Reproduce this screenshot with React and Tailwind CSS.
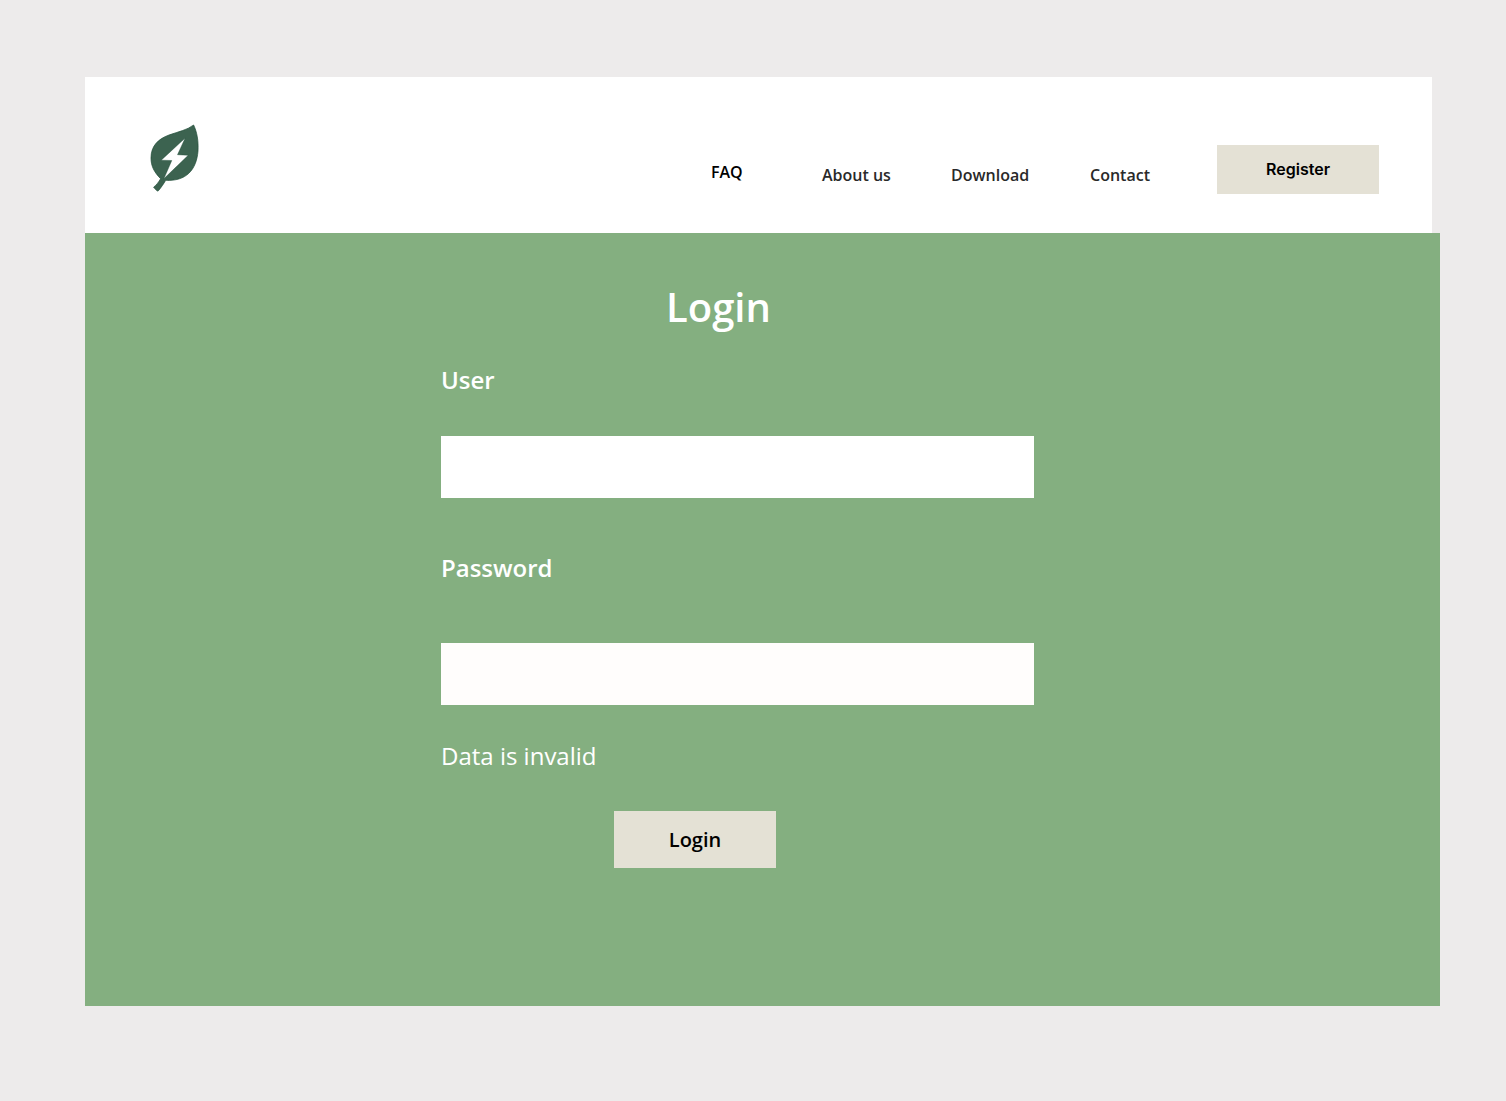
const links = [
  { label: "FAQ", style: "w-[111px] pb-[3px] text-black" },
  { label: "About us", style: "w-[129px] text-[#292929]" },
  { label: "Download", style: "w-[139px] text-[#292929]" },
  { label: "Contact", style: "w-[127px] text-[#292929]" },
];

function Logo() {
  return (
    <svg width="50" height="68" viewBox="0 0 50 68" role="img" aria-label="Leaf logo">
      <path
        fill="#3c6350"
        stroke="#1d4a35"
        strokeWidth="0.7"
        d="M43.6 1 C47 8 48.6 17 48 27 C46.5 46 36 57.500 15.700 56.300 C13.500 60 11.500 63 8.600 66.500 C8 67.200 7.300 67.200 6.700 66.600 L3.600 63.200 C6.500 61 8.700 58 10.600 54.700 C4 48 1 42 1 34 C1 22 8 15 19 11 C29 7.500 37 6 43.600 1 Z"
      />
      <path fill="#fff" stroke="#1d4a35" strokeWidth="0.4" d="M35.200 14 L11.200 36.200 L21.800 36.500 L13.800 54.800 L38.200 31.300 L27.500 30.700 Z" />
    </svg>
  );
}

function Field({ id, label, type, className, inputClass }) {
  return (
    <div className={className}>
      <label htmlFor={id} className="text-2xl font-semibold">{label}</label>
      <input id={id} type={type} className={inputClass} />
    </div>
  );
}

export default function App() {
  return (
    <div className="min-h-screen bg-[#edebeb] pt-[77px] pr-[66px] pb-[95px] pl-[85px] font-['Open_Sans',sans-serif]">
      <header className="mr-2 flex h-[156px] items-start justify-between bg-white pr-[53px] pl-[65px]">
        <a href="#home" className="mt-[47px]">
          <Logo />
        </a>
        <div className="mt-[68px] flex items-start">
          <nav className="flex h-[42px] items-end pl-px text-base leading-6 font-semibold">
            {links.map((link) => (
              <a key={link.label} href="#" className={link.style}>{link.label}</a>
            ))}
          </nav>
          <button type="button" className="h-[49px] w-[162px] bg-[#e4e1d5] pb-0.5 font-['Inter',sans-serif] text-base font-semibold text-black">
            Register
          </button>
        </div>
      </header>
      <main className="min-h-[773px] bg-[#84af80] pt-[50px] pl-[356px] text-white">
        <form className="w-[593px] max-w-full">
          <h1 className="pr-[38px] text-center text-[40px] leading-[48px] font-semibold">Login</h1>
          <Field id="user" label="User" type="text" className="mt-[33px] flex flex-col gap-[40px]" inputClass="h-[62px] w-full bg-white px-4 text-xl text-black" />
          <Field id="password" label="Password" type="password" className="mt-[54px] flex flex-col gap-[59px]" inputClass="h-[62px] w-full bg-[#fffdfc] px-4 text-xl text-black" />
          <p role="alert" className="mt-[35px] text-2xl">Data is invalid</p>
          <button type="button" className="mt-[39px] ml-[173px] h-[57px] w-[162px] bg-[#e4e1d5] text-xl font-semibold text-black">
            Login
          </button>
        </form>
      </main>
    </div>
  );
}
